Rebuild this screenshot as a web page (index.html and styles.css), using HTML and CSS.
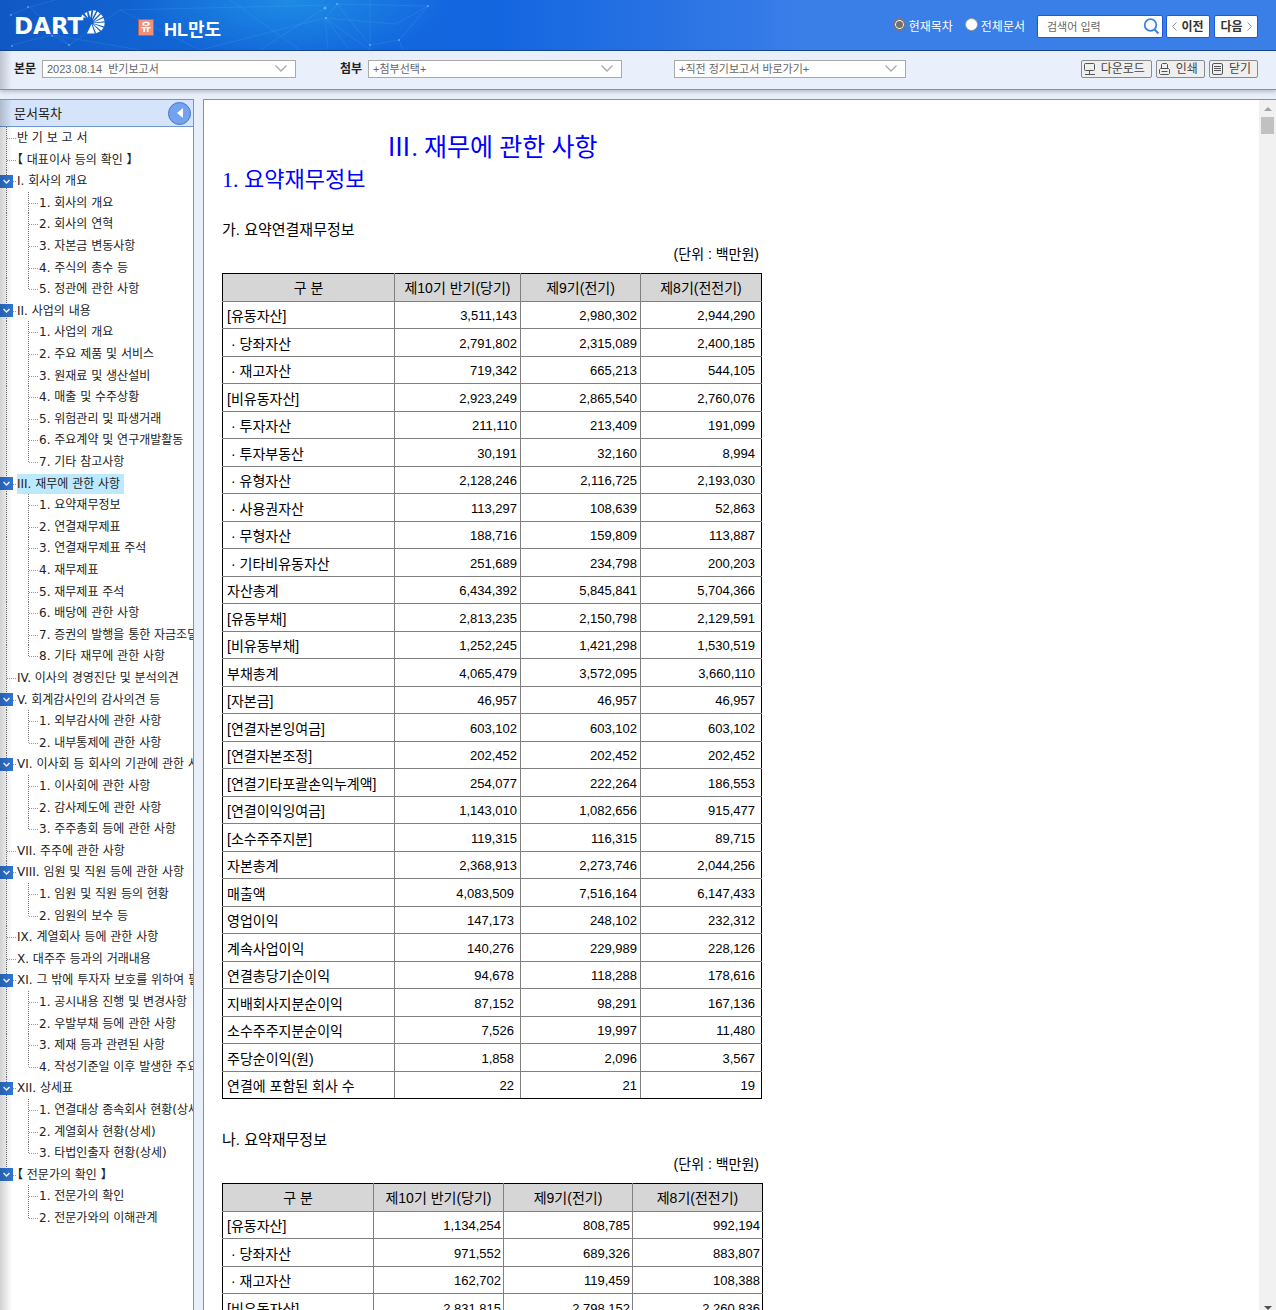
FILE: index.html
```
<!DOCTYPE html>
<html lang="ko">
<head>
<meta charset="utf-8">
<title>HL만도 - 반기보고서</title>
<link rel="stylesheet" href="styles.css">
</head>
<body>
<svg class="defs" aria-hidden="true">
  <symbol id="fold" viewBox="0 0 13 13"><path d="M3.5 5l3 3 3-3" fill="none" stroke="#fff" stroke-width="1.5"/></symbol>
  <symbol id="down" viewBox="0 0 12 7"><path d="M.5.5L6 6l5.500-5.500" fill="none" stroke="#aaa" stroke-width="1.3"/></symbol>
</svg>
<header class="top">
  <svg class="net" width="440" height="50" viewBox="0 0 440 50" aria-hidden="true">
    <g fill="none" stroke="#8cc8ff" stroke-opacity=".13">
      <path d="M10 15L30 7 55 0M12 45L52 35 69 45 30 7M69 45L120 10 200 50M52 35L140 50M120 10L330 5M200 50L325 18 337 4 428 6 399 40 370 45 337 4M325 18L328 50M325 18L350 50M325 18L370 50M260 50L325 8M325 18L396 24 428 6M399 40L403 50M370 0V50M230 0L300 50"/>
    </g>
    <g fill="#9fd0ff" fill-opacity=".55"><circle cx="28" cy="7" r="1"/><circle cx="11" cy="15" r="1"/><circle cx="52" cy="36" r="1"/><circle cx="69" cy="45" r="1"/><circle cx="12" cy="46" r="1"/><circle cx="325" cy="8" r="1.500"/><circle cx="337" cy="4" r="1"/><circle cx="326" cy="18" r="1"/><circle cx="428" cy="6" r="1"/><circle cx="399" cy="40" r="1"/><circle cx="370" cy="45" r="1"/></g>
  </svg>
  <a class="logo" href="#" aria-label="DART">
    <span class="logo-text">DART</span>
    <svg class="burst" width="24" height="24" viewBox="0 0 24 24" aria-hidden="true">
      <g fill="#fff">
        <path d="M5 8L0 6.500l1.500-2z"/><path d="M7 8L3.500 3.500 6 2z"/><path d="M9.300 8L7.500 1.200 10.500.5z"/><path d="M11 9L12.200.3l3 .5z"/><path d="M11.500 11L16.500 1.500l2.500 1.700z"/><path d="M12 12.300L20 4.200l2 2.600z"/><path d="M12 12.800L22.500 8l1 3.300z"/><path d="M12 13.200l11.700-.7-.5 4z"/><path d="M12 13.700l10.500 4-2.300 3z"/><path d="M11.500 14l7.500 7.500-4 1.800z"/><path d="M10.500 14l3.200 9.500H6z"/>
      </g>
    </svg>
  </a>
  <span class="market">유</span>
  <h1 class="company">HL만도</h1>
  <form class="search">
    <label class="scope"><input type="radio" name="scope" checked>현재목차</label>
    <label class="scope"><input type="radio" name="scope">전체문서</label>
    <span class="search-box">
      <input type="text" placeholder="검색어 입력" aria-label="검색어 입력">
      <button type="button" class="find" aria-label="검색"><svg width="17" height="17" viewBox="0 0 17 17"><circle cx="7.500" cy="7" r="5.800" fill="none" stroke="#3b82e6" stroke-width="1.800"/><path d="M11.500 11.500l4 4" stroke="#3b82e6" stroke-width="2"/></svg></button>
    </span>
    <button type="button" class="step"><svg width="5" height="9" viewBox="0 0 5 9"><path d="M4.500.5l-4 4 4 4" fill="none" stroke="#999"/></svg>이전</button>
    <button type="button" class="step next">다음<svg width="5" height="9" viewBox="0 0 5 9"><path d="M.5.5l4 4-4 4" fill="none" stroke="#999"/></svg></button>
  </form>
</header>
<div class="tools">
  <label class="tool-label" for="doc">본문</label>
  <span class="pick"><select id="doc"><option>2023.08.14 &nbsp;반기보고서</option></select><svg class="arrow" width="12" height="7"><use href="#down"/></svg></span>
  <label class="tool-label attach" for="att">첨부</label>
  <span class="pick"><select id="att"><option>+첨부선택+</option></select><svg class="arrow" width="12" height="7"><use href="#down"/></svg></span>
  <span class="pick prior"><select aria-label="직전 정기보고서"><option>+직전 정기보고서 바로가기+</option></select><svg class="arrow" width="12" height="7"><use href="#down"/></svg></span>
  <div class="actions">
    <button type="button"><svg width="12" height="12" viewBox="0 0 12 12" fill="none" stroke="#555"><rect x=".5" y=".5" width="10" height="7" rx="1"/><path d="M5.500 8v3M1 11.500h10"/></svg>다운로드</button>
    <button type="button"><svg width="12" height="12" viewBox="0 0 12 12" fill="none" stroke="#555"><path d="M2.500 5.500v-4l1-1h4l1 1v4M1.500 5.500h8l1 1v4l-1 1h-8l-1-1v-4z"/><path d="M2.500 8.500h6"/></svg>인쇄</button>
    <button type="button"><svg width="12" height="12" viewBox="0 0 12 12" fill="none" stroke="#555"><rect x=".5" y=".5" width="10" height="11" rx="1.500"/><path d="M2 3.500h7M2 5.500h7M2 7.500h7"/></svg>닫기</button>
  </div>
</div>
<div class="main">
  <nav class="side">
    <div class="side-head"><h2>문서목차</h2><button type="button" class="hide" aria-label="목차 닫기"><svg width="6" height="10" viewBox="0 0 6 10"><path d="M6 0v10L0 5z" fill="#fff"/></svg></button></div>
    <ul class="tree">
      <li><a href="#">반 기 보 고 서</a></li>
      <li><a href="#" class="boxed">【 대표이사 등의 확인 】</a></li>
      <li class="open"><button type="button" aria-label="접기"><svg width="13" height="13"><use href="#fold"/></svg></button><a href="#">I. 회사의 개요</a></li>
      <li class="sub"><a href="#">1. 회사의 개요</a></li>
      <li class="sub"><a href="#">2. 회사의 연혁</a></li>
      <li class="sub"><a href="#">3. 자본금 변동사항</a></li>
      <li class="sub"><a href="#">4. 주식의 총수 등</a></li>
      <li class="sub last"><a href="#">5. 정관에 관한 사항</a></li>
      <li class="open"><button type="button" aria-label="접기"><svg width="13" height="13"><use href="#fold"/></svg></button><a href="#">II. 사업의 내용</a></li>
      <li class="sub"><a href="#">1. 사업의 개요</a></li>
      <li class="sub"><a href="#">2. 주요 제품 및 서비스</a></li>
      <li class="sub"><a href="#">3. 원재료 및 생산설비</a></li>
      <li class="sub"><a href="#">4. 매출 및 수주상황</a></li>
      <li class="sub"><a href="#">5. 위험관리 및 파생거래</a></li>
      <li class="sub"><a href="#">6. 주요계약 및 연구개발활동</a></li>
      <li class="sub last"><a href="#">7. 기타 참고사항</a></li>
      <li class="open"><button type="button" aria-label="접기"><svg width="13" height="13"><use href="#fold"/></svg></button><a href="#" class="current">III. 재무에 관한 사항</a></li>
      <li class="sub"><a href="#">1. 요약재무정보</a></li>
      <li class="sub"><a href="#">2. 연결재무제표</a></li>
      <li class="sub"><a href="#">3. 연결재무제표 주석</a></li>
      <li class="sub"><a href="#">4. 재무제표</a></li>
      <li class="sub"><a href="#">5. 재무제표 주석</a></li>
      <li class="sub"><a href="#">6. 배당에 관한 사항</a></li>
      <li class="sub"><a href="#">7. 증권의 발행을 통한 자금조달</a></li>
      <li class="sub last"><a href="#">8. 기타 재무에 관한 사항</a></li>
      <li><a href="#">IV. 이사의 경영진단 및 분석의견</a></li>
      <li class="open"><button type="button" aria-label="접기"><svg width="13" height="13"><use href="#fold"/></svg></button><a href="#">V. 회계감사인의 감사의견 등</a></li>
      <li class="sub"><a href="#">1. 외부감사에 관한 사항</a></li>
      <li class="sub last"><a href="#">2. 내부통제에 관한 사항</a></li>
      <li class="open"><button type="button" aria-label="접기"><svg width="13" height="13"><use href="#fold"/></svg></button><a href="#">VI. 이사회 등 회사의 기관에 관한 사</a></li>
      <li class="sub"><a href="#">1. 이사회에 관한 사항</a></li>
      <li class="sub"><a href="#">2. 감사제도에 관한 사항</a></li>
      <li class="sub last"><a href="#">3. 주주총회 등에 관한 사항</a></li>
      <li><a href="#">VII. 주주에 관한 사항</a></li>
      <li class="open"><button type="button" aria-label="접기"><svg width="13" height="13"><use href="#fold"/></svg></button><a href="#">VIII. 임원 및 직원 등에 관한 사항</a></li>
      <li class="sub"><a href="#">1. 임원 및 직원 등의 현황</a></li>
      <li class="sub last"><a href="#">2. 임원의 보수 등</a></li>
      <li><a href="#">IX. 계열회사 등에 관한 사항</a></li>
      <li><a href="#">X. 대주주 등과의 거래내용</a></li>
      <li class="open"><button type="button" aria-label="접기"><svg width="13" height="13"><use href="#fold"/></svg></button><a href="#">XI. 그 밖에 투자자 보호를 위하여 필</a></li>
      <li class="sub"><a href="#">1. 공시내용 진행 및 변경사항</a></li>
      <li class="sub"><a href="#">2. 우발부채 등에 관한 사항</a></li>
      <li class="sub"><a href="#">3. 제재 등과 관련된 사항</a></li>
      <li class="sub last"><a href="#">4. 작성기준일 이후 발생한 주요</a></li>
      <li class="open"><button type="button" aria-label="접기"><svg width="13" height="13"><use href="#fold"/></svg></button><a href="#">XII. 상세표</a></li>
      <li class="sub"><a href="#">1. 연결대상 종속회사 현황(상세</a></li>
      <li class="sub"><a href="#">2. 계열회사 현황(상세)</a></li>
      <li class="sub last"><a href="#">3. 타법인출자 현황(상세)</a></li>
      <li class="open final"><button type="button" aria-label="접기"><svg width="13" height="13"><use href="#fold"/></svg></button><a href="#" class="boxed">【 전문가의 확인 】</a></li>
      <li class="sub tail"><a href="#">1. 전문가의 확인</a></li>
      <li class="sub tail last"><a href="#">2. 전문가와의 이해관계</a></li>
    </ul>
  </nav>
  <main class="doc">
    <article class="page">
      <h2 class="title">Ⅲ. 재무에 관한 사항</h2>
      <h3 class="chapter">1. 요약재무정보</h3>
      <section>
        <h4>가. 요약연결재무정보</h4>
        <p class="unit">(단위 : 백만원)</p>
        <table class="fin group">
          <colgroup><col class="g1"><col class="g2"><col class="g3"><col class="g4"></colgroup>
          <thead><tr><th>구 분</th><th>제10기 반기(당기)</th><th>제9기(전기)</th><th>제8기(전전기)</th></tr></thead>
          <tbody>
            <tr><td>[유동자산]</td><td>3,511,143</td><td>2,980,302</td><td>2,944,290</td></tr>
            <tr><td class="in">· 당좌자산</td><td>2,791,802</td><td>2,315,089</td><td>2,400,185</td></tr>
            <tr><td class="in">· 재고자산</td><td>719,342</td><td>665,213</td><td>544,105</td></tr>
            <tr><td>[비유동자산]</td><td>2,923,249</td><td>2,865,540</td><td>2,760,076</td></tr>
            <tr><td class="in">· 투자자산</td><td>211,110</td><td>213,409</td><td>191,099</td></tr>
            <tr><td class="in">· 투자부동산</td><td>30,191</td><td>32,160</td><td>8,994</td></tr>
            <tr><td class="in">· 유형자산</td><td>2,128,246</td><td>2,116,725</td><td>2,193,030</td></tr>
            <tr><td class="in">· 사용권자산</td><td>113,297</td><td>108,639</td><td>52,863</td></tr>
            <tr><td class="in">· 무형자산</td><td>188,716</td><td>159,809</td><td>113,887</td></tr>
            <tr><td class="in">· 기타비유동자산</td><td>251,689</td><td>234,798</td><td>200,203</td></tr>
            <tr><td>자산총계</td><td>6,434,392</td><td>5,845,841</td><td>5,704,366</td></tr>
            <tr><td>[유동부채]</td><td>2,813,235</td><td>2,150,798</td><td>2,129,591</td></tr>
            <tr><td>[비유동부채]</td><td>1,252,245</td><td>1,421,298</td><td>1,530,519</td></tr>
            <tr><td>부채총계</td><td>4,065,479</td><td>3,572,095</td><td>3,660,110</td></tr>
            <tr><td>[자본금]</td><td>46,957</td><td>46,957</td><td>46,957</td></tr>
            <tr><td>[연결자본잉여금]</td><td>603,102</td><td>603,102</td><td>603,102</td></tr>
            <tr><td>[연결자본조정]</td><td>202,452</td><td>202,452</td><td>202,452</td></tr>
            <tr><td>[연결기타포괄손익누계액]</td><td>254,077</td><td>222,264</td><td>186,553</td></tr>
            <tr><td>[연결이익잉여금]</td><td>1,143,010</td><td>1,082,656</td><td>915,477</td></tr>
            <tr><td>[소수주주지분]</td><td>119,315</td><td>116,315</td><td>89,715</td></tr>
            <tr><td>자본총계</td><td>2,368,913</td><td>2,273,746</td><td>2,044,256</td></tr>
            <tr class="pl"><td>매출액</td><td>4,083,509</td><td>7,516,164</td><td>6,147,433</td></tr>
            <tr class="pl"><td>영업이익</td><td>147,173</td><td>248,102</td><td>232,312</td></tr>
            <tr class="pl"><td>계속사업이익</td><td>140,276</td><td>229,989</td><td>228,126</td></tr>
            <tr class="pl"><td>연결총당기순이익</td><td>94,678</td><td>118,288</td><td>178,616</td></tr>
            <tr class="pl"><td>지배회사지분순이익</td><td>87,152</td><td>98,291</td><td>167,136</td></tr>
            <tr class="pl"><td>소수주주지분순이익</td><td>7,526</td><td>19,997</td><td>11,480</td></tr>
            <tr class="pl"><td>주당순이익(원)</td><td>1,858</td><td>2,096</td><td>3,567</td></tr>
            <tr class="pl"><td>연결에 포함된 회사 수</td><td>22</td><td>21</td><td>19</td></tr>
          </tbody>
        </table>
      </section>
      <section>
        <h4>나. 요약재무정보</h4>
        <p class="unit">(단위 : 백만원)</p>
        <table class="fin single">
          <colgroup><col class="s1"><col class="s2"><col class="s3"><col class="s4"></colgroup>
          <thead><tr><th>구 분</th><th>제10기 반기(당기)</th><th>제9기(전기)</th><th>제8기(전전기)</th></tr></thead>
          <tbody>
            <tr><td>[유동자산]</td><td>1,134,254</td><td>808,785</td><td>992,194</td></tr>
            <tr><td class="in">· 당좌자산</td><td>971,552</td><td>689,326</td><td>883,807</td></tr>
            <tr><td class="in">· 재고자산</td><td>162,702</td><td>119,459</td><td>108,388</td></tr>
            <tr><td>[비유동자산]</td><td>2,831,815</td><td>2,798,152</td><td>2,260,836</td></tr>
          </tbody>
        </table>
      </section>
    </article>
    <div class="bar" aria-hidden="true"><i class="up"></i><i class="thumb"></i><i class="dn"></i></div>
  </main>
</div>
</body>
</html>
```
FILE: styles.css
```
* { box-sizing: border-box; }
body {
  margin: 0;
  height: 100vh;
  overflow: hidden;
  display: flex;
  flex-direction: column;
  background: #e8effb;
  color: #222;
  font: 12px/20px "Liberation Sans", "Noto Sans CJK KR", sans-serif;
}
h1, h2, h3, h4, p, ul { margin: 0; padding: 0; font-weight: 400; }
a { color: inherit; text-decoration: none; }
button, input, select { font: inherit; color: inherit; margin: 0; }
button { padding: 0; }
.defs { position: absolute; width: 0; height: 0; }

/* header */
.top {
  position: relative;
  flex: none;
  display: flex;
  align-items: flex-start;
  height: 51px;
  padding: 0 18px 0 14px;
  border-bottom: 1px solid #16458f;
  color: #fff;
  background: radial-gradient(ellipse 160px 60px at 290px 0, #1e8be4 0, rgba(30, 139, 228, 0) 100%), linear-gradient(90deg, #1059c4 0, #1163d2 140px, #1268dc 300px, #1466e0 500px, #2a74e4 680px, #3a7ee8 800px);
}
.net { position: absolute; left: 0; top: 0; }
.logo { position: relative; width: 91px; height: 50px; padding-top: 12px; color: #fff; }
.logo-text { display: block; font: bold 23px/28px "DejaVu Sans", sans-serif; }
.burst { position: absolute; right: 0; top: 10px; }
.market {
  position: relative;
  width: 16px;
  height: 17px;
  margin: 19px 10px 0 33px;
  border: 1px solid #b5654f;
  background: #f0917c;
  font-size: 11px;
  line-height: 14px;
  font-weight: bold;
  text-align: center;
}
.company { position: relative; margin-top: 18px; font-size: 18px; line-height: 24px; font-weight: bold; }
.search { position: relative; display: flex; align-items: center; margin: 15px 0 0 auto; height: 23px; }
.scope { display: flex; align-items: center; gap: 3px; margin-right: 12px; }
.scope input {
  appearance: none;
  width: 13px;
  height: 13px;
  margin-bottom: 4px;
  border: 1px solid #999;
  border-radius: 50%;
  background: #fff;
}
.scope input:checked { background: #707070; border: 2px solid #777; box-shadow: inset 0 0 0 1px #fff; }
.search-box {
  display: flex;
  align-items: center;
  width: 126px;
  height: 23px;
  margin-right: 3px;
  padding: 0 2px 0 9px;
  background: #fff;
  border: 1px solid #1f57d8;
  border-radius: 2px;
}
.search-box input { flex: 1; min-width: 0; padding: 0; border: 0; outline: 0; font-size: 11px; background: none; color: #555; }
.search-box input::placeholder { color: #666; }
.find { display: flex; border: 0; background: none; }
.step {
  display: flex;
  align-items: center;
  justify-content: center;
  gap: 4px;
  width: 44px;
  height: 23px;
  border: 1px solid #1f57d8;
  border-radius: 2px;
  background: #fff;
  color: #333;
  font-weight: bold;
}
.next { margin-left: 4px; }

/* document pickers */
.tools {
  position: relative;
  z-index: 1;
  flex: none;
  display: flex;
  align-items: flex-start;
  height: 39px;
  padding: 9px 18px 0 14px;
  border-bottom: 1px solid #6d96cf;
  box-shadow: 0 2px 4px rgba(0, 0, 0, .2);
  background: linear-gradient(90deg, rgba(0, 0, 0, .18), rgba(0, 0, 0, 0) 12px), #e9f0fc;
}
.tool-label { width: 28px; line-height: 18px; font-weight: bold; }
.attach { margin-left: 44px; }
.pick { position: relative; width: 254px; height: 18px; }
.prior { width: 232px; margin-left: 52px; }
.pick select {
  display: block;
  appearance: none;
  width: 100%;
  height: 18px;
  padding: 0 24px 0 4px;
  border: 1px solid #a9a9a9;
  border-radius: 0;
  background: #fff;
  color: #666;
  font-size: 11px;
  line-height: 16px;
}
.arrow { position: absolute; right: 9px; top: 5px; pointer-events: none; }
.actions { display: flex; gap: 4px; margin-left: auto; }
.actions button {
  display: flex;
  align-items: center;
  gap: 5px;
  height: 18px;
  padding: 0 6px 0 2px;
  border: 1px solid #8a8a8a;
  border-radius: 2px;
  background: #efefef;
  color: #444;
  line-height: 16px;
}

/* contents tree */
.main { flex: 1; min-height: 0; display: flex; gap: 9px; padding-top: 9px; }
.side {
  position: relative;
  flex: none;
  width: 194px;
  overflow: hidden;
  background: #fff;
  border-top: 1px solid #6d96cf;
  border-right: 1px solid #6d96cf;
}
.side::after {
  content: "";
  position: absolute;
  inset: 0 auto 0 0;
  width: 12px;
  pointer-events: none;
  background: linear-gradient(90deg, rgba(0, 0, 0, .18), rgba(0, 0, 0, 0));
}
.side-head {
  display: flex;
  align-items: center;
  justify-content: space-between;
  height: 27px;
  padding: 0 2px 0 14px;
  border-bottom: 1px solid #6d96cf;
  background: #d5e4fa;
}
.side-head h2 { padding-top: 2px; font-size: 13px; }
.hide {
  display: flex;
  align-items: center;
  justify-content: center;
  width: 23px;
  height: 23px;
  border: 1px solid #4a78bd;
  border-radius: 50%;
  background: #72a2f0;
}
.tree { list-style: none; font-family: "DejaVu Sans", "Noto Sans CJK KR", sans-serif; font-size: 12px; white-space: nowrap; }
.tree li {
  --v: repeating-linear-gradient(#777 0 1px, transparent 1px 2px);
  --h: repeating-linear-gradient(90deg, #999 0 1px, transparent 1px 2px);
  display: flex;
  align-items: center;
  height: 22px;
  padding-left: 17px;
  background: var(--v) 6px 0 / 1px 100% no-repeat, var(--h) 7px 11px / 10px 1px no-repeat;
}
.tree li:nth-child(5n+2), .tree li:nth-child(5n+4) { height: 21px; }
.tree .open { padding-left: 0; gap: 4px; }
.tree .final { background: var(--v) 6px 0 / 1px 50% no-repeat, var(--h) 7px 11px / 10px 1px no-repeat; }
.tree .sub {
  padding-left: 39px;
  background: var(--v) 6px 0 / 1px 100% no-repeat, var(--v) 28px 0 / 1px 100% no-repeat, var(--h) 29px 11px / 10px 1px no-repeat;
}
.tree .sub.last { background-size: 1px 100%, 1px 50%, 10px 1px; }
.tree .sub.tail { background: var(--v) 28px 0 / 1px 100% no-repeat, var(--h) 29px 11px / 10px 1px no-repeat; }
.tree .sub.tail.last { background-size: 1px 50%, 10px 1px; }
.tree button { flex: none; display: flex; width: 13px; height: 13px; border: 0; background: #2f74d4; }
.tree .current { padding-right: 4px; background: #bde9ff; }
.tree .boxed { font-feature-settings: "halt"; }

/* report body */
.doc {
  flex: 1;
  min-width: 0;
  display: flex;
  justify-content: space-between;
  overflow: hidden;
  background: #fff;
  border-top: 1px solid #6d96cf;
  border-left: 1px solid #6d96cf;
  color: #000;
}
.page { width: 558px; padding: 32px 0 0 18px; }
.title { color: #00f; font: 25px/32px "Liberation Serif", "Noto Sans CJK KR", serif; text-align: center; }
.chapter { color: #00f; font: 22px/32px "Liberation Serif", "Noto Sans CJK KR", serif; }
section { padding-top: 24px; }
section + section { padding-top: 31px; }
section h4 { font-size: 15px; line-height: 20px; }
.unit { margin: 4px 3px 9px 0; font-size: 14px; line-height: 20px; text-align: right; }
.fin { table-layout: fixed; border-collapse: collapse; border: 1px solid #000; font-size: 13px; line-height: 20px; }
.group { width: 540px; }
.single { width: 541px; }
.g1 { width: 172px; } .g2 { width: 126px; } .g3 { width: 120px; } .g4 { width: 121px; }
.s1 { width: 151px; } .s2 { width: 130px; } .s3 { width: 129px; } .s4 { width: 130px; }
.fin th, .fin td { padding: 0 2px; border: 1px solid #808080; text-align: right; white-space: nowrap; }
.fin td { padding-top: 2px; }
.fin thead tr, .fin tbody tr:nth-child(even) { height: 28px; }
.fin tbody tr { height: 27px; }
.fin th { background: #d6d6d6; font-size: 14px; font-weight: 400; text-align: center; }
.fin td:first-child { padding-left: 4px; font-size: 14px; text-align: left; }
.fin td.in:first-child { padding-left: 8px; }
.group td { padding-right: 3px; }
.group td:last-child { padding-right: 6px; }
.group .pl td:nth-child(2) { padding-right: 6px; }
.fin tr > :first-child { border-left-color: #000; }
.fin tr > :last-child { border-right-color: #000; }
.fin thead th { border-top-color: #000; }
.group tbody tr:last-child td { border-bottom-color: #000; }

/* scroll track */
.bar { display: flex; flex-direction: column; align-items: center; width: 17px; background: #f1f1f1; }
.bar .up, .bar .dn { border: 4px solid transparent; border-top: 0; border-bottom: 4px solid #a3a3a3; }
.bar .up { margin: 7px 0 6px; }
.bar .thumb { width: 13px; height: 17px; background: #c1c1c1; }
.bar .dn { margin-top: auto; border-bottom: 0; border-top: 4px solid #505050; }
```
